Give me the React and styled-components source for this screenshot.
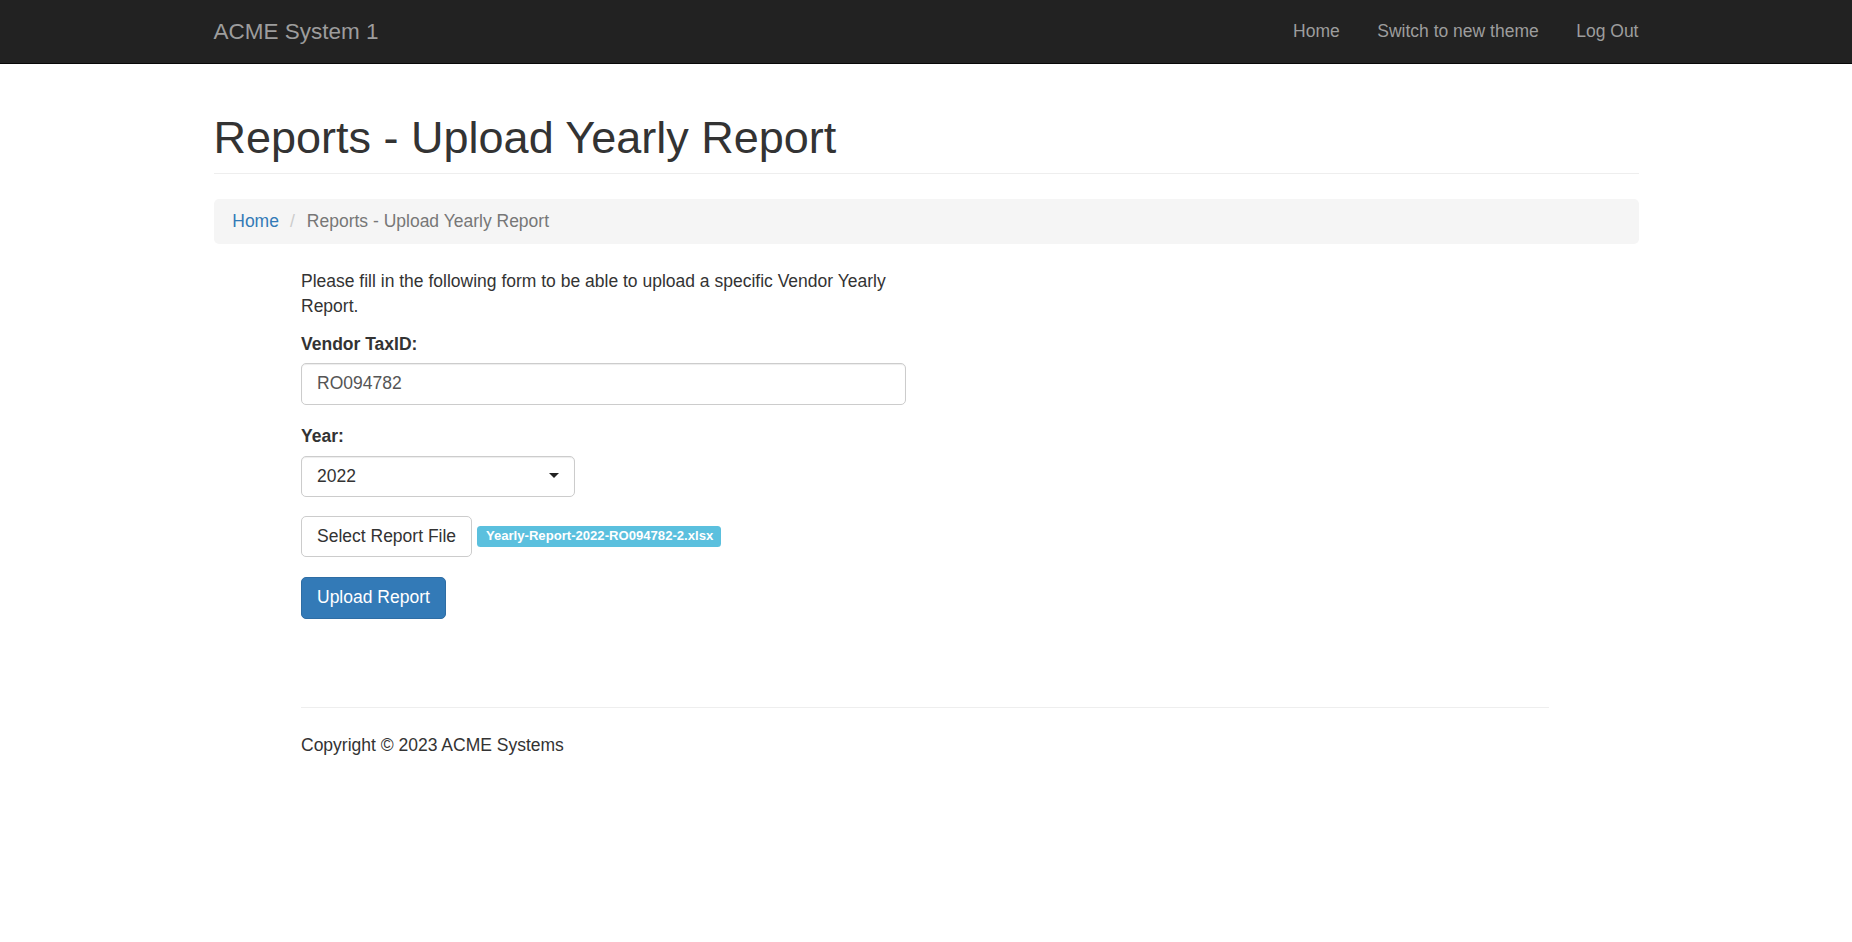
import React from "react";
import styled, { createGlobalStyle } from "styled-components";

const GlobalStyle = createGlobalStyle`
  * { box-sizing: border-box; }
  body {
    margin: 0;
    font-family: "Liberation Sans", Arial, Helvetica, sans-serif;
    font-size: 17.5px;
    line-height: 25px;
    color: #333;
    background: #fff;
  }
`

const Navbar = styled.nav`
  background-color: #222;
  border-bottom: 1px solid #080808;
`
const NavInner = styled.div`
  width: 1425px;
  margin: 0 auto;
  display: flex;
  justify-content: space-between;
  align-items: flex-start;
`
const Brand = styled.a`
  display: block;
  height: 62.5px;
  padding: 18.75px;
  margin-left: -18.75px;
  font-size: 22.5px;
  line-height: 25px;
  color: #9d9d9d;
  text-decoration: none;
`
const NavList = styled.ul`
  display: flex;
  list-style: none;
  margin: 0 -18.75px 0 0;
  padding: 0;
`
const NavLink = styled.a`
  display: block;
  padding: 18.75px;
  line-height: 25px;
  color: #9d9d9d;
  text-decoration: none;
`

const Container = styled.div`
  width: 1425px;
  margin: 0 auto;
`
const PageHeader = styled.div`
  margin: 49px 0 25px;
  padding-bottom: 11px;
  border-bottom: 1px solid #eee;
`
const Title = styled.h1`
  margin: 0;
  font-size: 45px;
  line-height: 1.1;
  font-weight: 500;
  color: #333;
`
const Breadcrumb = styled.ol`
  display: flex;
  list-style: none;
  margin: 0 0 25px;
  padding: 10px 18.75px;
  background-color: #f5f5f5;
  border-radius: 5px;
`
const Crumb = styled.li`
  color: ${p => (p.$active ? "#777" : "#337ab7")};
  &:not(:first-child)::before {
    content: "/";
    padding: 0 12px 0 11px;
    color: #ccc;
  }
`
const CrumbLink = styled.a`
  color: #337ab7;
  text-decoration: none;
`

const Content = styled.div`
  padding: 0 90px 0 87.5px;
`
const Form = styled.form`
  width: 605px;
`
const Intro = styled.p`
  margin: 0 0 12.5px;
`
const FormGroup = styled.div`
  margin-bottom: 18.75px;
`
const Label = styled.label`
  display: inline-block;
  margin-bottom: ${p => p.$gap || "6.25px"};
  font-weight: 700;
`
const Input = styled.input`
  display: block;
  width: 100%;
  height: 42px;
  padding: 7.5px 15px;
  font-family: inherit;
  font-size: 17.5px;
  line-height: 25px;
  color: #555;
  background: #fff;
  border: 1px solid #ccc;
  border-radius: 5px;
  box-shadow: inset 0 1px 1px rgba(0, 0, 0, 0.075);
  outline: none;
`
const SelectWrap = styled.div`
  position: relative;
  width: 274px;
`
const Select = styled.select`
  display: block;
  width: 100%;
  height: 40.5px;
  padding: 6px 15px;
  font-family: inherit;
  font-size: 17.5px;
  line-height: 25px;
  color: #333;
  background: #fff;
  border: 1px solid #ccc;
  border-radius: 5px;
  box-shadow: inset 0 1px 1px rgba(0, 0, 0, 0.075);
  appearance: none;
  outline: none;
`
const Caret = styled.span`
  position: absolute;
  right: 16px;
  top: 17px;
  width: 0;
  height: 0;
  border-left: 5px solid transparent;
  border-right: 5px solid transparent;
  border-top: 5px solid #222;
  pointer-events: none;
`
const FileRow = styled.div`
  display: flex;
  align-items: center;
  margin-top: 19.5px;
  margin-bottom: 20.5px;
`
const Button = styled.button`
  display: inline-block;
  height: ${p => (p.$primary ? "41.5px" : "40.5px")};
  padding: 0 15px;
  font-family: inherit;
  font-size: 17.5px;
  line-height: 25px;
  color: ${p => (p.$primary ? "#fff" : "#333")};
  background-color: ${p => (p.$primary ? "#337ab7" : "#fff")};
  border: 1px solid ${p => (p.$primary ? "#2e6da4" : "#ccc")};
  border-radius: 5px;
  cursor: pointer;
`
const FileBadge = styled.span`
  display: inline-block;
  margin-left: 5px;
  padding: 3.5px 8px 4.5px 8.8px;
  font-size: 13.125px;
  font-weight: 700;
  line-height: 1;
  color: #fff;
  background-color: #5bc0de;
  border-radius: 3.5px;
  white-space: nowrap;
`
const Rule = styled.hr`
  margin: 88.5px 0 24.5px;
  border: 0;
  border-top: 1px solid #eee;
`
const Copyright = styled.p`
  margin: 0 0 12.5px;
`

function App() {
  return (
    <>
      <GlobalStyle />
      <Navbar>
        <NavInner>
          <Brand href="#">ACME System 1</Brand>
          <NavList>
            <li><NavLink href="#">Home</NavLink></li>
            <li><NavLink href="#">Switch to new theme</NavLink></li>
            <li><NavLink href="#">Log Out</NavLink></li>
          </NavList>
        </NavInner>
      </Navbar>

      <Container>
        <PageHeader>
          <Title>Reports - Upload Yearly Report</Title>
        </PageHeader>
        <Breadcrumb>
          <Crumb><CrumbLink href="#">Home</CrumbLink></Crumb>
          <Crumb $active>Reports - Upload Yearly Report</Crumb>
        </Breadcrumb>

        <Content>
          <Form onSubmit={e => e.preventDefault()}>
            <Intro>
              Please fill in the following form to be able to upload a specific Vendor Yearly Report.
            </Intro>
            <FormGroup>
              <Label htmlFor="taxid">Vendor TaxID:</Label>
              <Input id="taxid" defaultValue="RO094782" />
            </FormGroup>
            <div>
              <Label htmlFor="year" $gap="7.5px">Year:</Label>
              <SelectWrap>
                <Select id="year" defaultValue="2022">
                  <option>2021</option>
                  <option>2022</option>
                  <option>2023</option>
                </Select>
                <Caret />
              </SelectWrap>
            </div>
            <FileRow>
              <Button type="button">Select Report File</Button>
              <FileBadge>Yearly-Report-2022-RO094782-2.xlsx</FileBadge>
            </FileRow>
            <Button type="submit" $primary>Upload Report</Button>
          </Form>

          <Rule />
          <Copyright>Copyright © 2023 ACME Systems</Copyright>
        </Content>
      </Container>
    </>
  );
}

export default App
